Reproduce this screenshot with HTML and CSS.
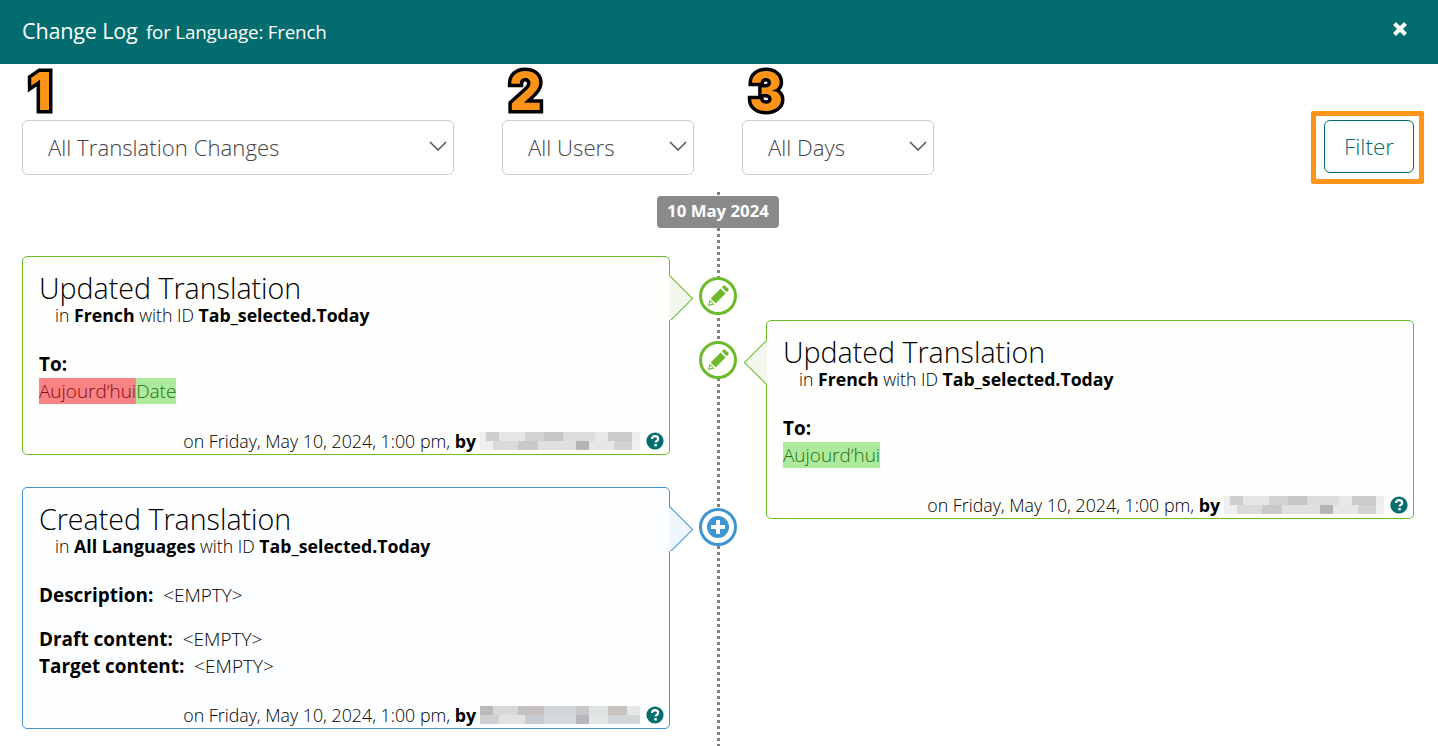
FILE: index.html
```html
<!DOCTYPE html>
<html>
<head>
    <meta charset="UTF-8">
    <meta name="viewport" content="width=device-width, initial-scale=1.0">
    <title>Change Log</title>
    <link rel="stylesheet" href="styles.css">
</head>
<body>
    <svg class="defs" width="0" height="0">
        <symbol id="pencil" viewBox="0 0 24 24">
            <path d="M2 22 L3.6 15.6 L6 18 L8.4 20.4 Z M4.6 14.4 L14.6 4.4 L19.6 9.4 L9.6 19.4 Z M15.8 3.2 L17.4 1.7 Q18.3 1 19.2 1.7 L22.3 4.8 Q23 5.7 22.3 6.6 L20.8 8.2 Z"/>
            <path d="M3.4 20.6 L4.2 17.4 L6.6 19.8 Z" fill="#fff"/>
        </symbol>
        <symbol id="help" viewBox="0 0 18 18">
            <circle cx="9" cy="9" r="8.6" fill="#026c6e"/>
            <path d="M6 7 Q6.1 4.2 9.1 4.2 Q12.1 4.3 12.1 6.7 Q12.1 8.2 10.7 9 Q9.6 9.6 9.6 10.6" fill="none" stroke="#fff" stroke-width="2.2"/>
            <rect x="8.3" y="12" width="2.5" height="2.4" fill="#fff"/>
        </symbol>
        <symbol id="chevron" viewBox="0 0 18 10">
            <path d="M1 1 L9 9 L17 1" fill="none" stroke="#555" stroke-width="1.5"/>
        </symbol>
    </svg>

    <header class="modal-head">
        <h1>Change Log <small>for Language: French</small></h1>
        <svg class="close-icon" viewBox="0 0 16 16"><path d="M2.5 2.5 L13.5 13.5 M13.5 2.5 L2.5 13.5" stroke="#fff" stroke-width="4"/></svg>
    </header>

    <section class="filters">
        <div class="filter filter-type">
            <span class="step">1</span>
            <div class="select"><span>All Translation Changes</span><svg class="chevron"><use href="#chevron"/></svg></div>
        </div>
        <div class="filter filter-short">
            <span class="step">2</span>
            <div class="select"><span>All Users</span><svg class="chevron"><use href="#chevron"/></svg></div>
        </div>
        <div class="filter filter-short">
            <span class="step">3</span>
            <div class="select"><span>All Days</span><svg class="chevron"><use href="#chevron"/></svg></div>
        </div>
        <div class="filter-box"><button class="filter-btn">Filter</button></div>
    </section>

    <main class="timeline">
        <div class="date-row"><span class="date-badge">10 May 2024</span></div>
        <div class="columns">
            <div class="col">
                <article class="card card-update side-left">
                    <span class="arrow"></span>
                    <span class="node"><svg><use href="#pencil"/></svg></span>
                    <h3>Updated Translation</h3>
                    <p class="sub">in <b>French</b> with ID <b>Tab_selected.Today</b></p>
                    <p class="field field-label"><b>To:</b></p>
                    <p class="field"><span class="del">Aujourd’hui</span><span class="ins">Date</span></p>
                    <p class="meta">on Friday, May 10, 2024, 1:00 pm, <b>by</b> <span class="blur blur-a"></span><svg class="help"><use href="#help"/></svg></p>
                </article>
                <article class="card card-create side-left">
                    <span class="arrow"></span>
                    <span class="node node-plus"><span class="plus"></span></span>
                    <h3>Created Translation</h3>
                    <p class="sub">in <b>All Languages</b> with ID <b>Tab_selected.Today</b></p>
                    <p class="field field-label"><b>Description:</b>&nbsp; &lt;EMPTY&gt;</p>
                    <p class="field field-gap"><b>Draft content:</b>&nbsp; &lt;EMPTY&gt;</p>
                    <p class="field"><b>Target content:</b>&nbsp; &lt;EMPTY&gt;</p>
                    <p class="meta">on Friday, May 10, 2024, 1:00 pm, <b>by</b> <span class="blur blur-b"></span><svg class="help"><use href="#help"/></svg></p>
                </article>
            </div>
            <div class="col col-right">
                <article class="card card-update side-right">
                    <span class="arrow"></span>
                    <span class="node"><svg><use href="#pencil"/></svg></span>
                    <h3>Updated Translation</h3>
                    <p class="sub">in <b>French</b> with ID <b>Tab_selected.Today</b></p>
                    <p class="field field-label"><b>To:</b></p>
                    <p class="field"><span class="ins">Aujourd’hui</span></p>
                    <p class="meta">on Friday, May 10, 2024, 1:00 pm, <b>by</b> <span class="blur blur-a"></span><svg class="help"><use href="#help"/></svg></p>
                </article>
            </div>
        </div>
    </main>
</body>
</html>
```

FILE: styles.css
```css
* { box-sizing: border-box; }
html, body { height: 100%; }
body { margin: 0; overflow: hidden; background: #fff; color: #000; font-family: "Open Sans", sans-serif; font-size: 18px; font-weight: 300; line-height: 27px; }
p, h1, h3 { margin: 0; }
b { font-weight: 700; }
.defs { position: absolute; }

.modal-head { height: 64px; background: #026c6e; color: #fff; display: flex; align-items: center; justify-content: space-between; padding: 0 30px 2px 22px; }
.modal-head h1 { font-size: 21.6px; font-weight: 400; line-height: 30px; letter-spacing: -0.2px; }
.modal-head small { font-size: 18.8px; margin-left: 3px; }
.close-icon { width: 16px; height: 16px; margin-top: -4px; }

.filters { display: flex; align-items: flex-end; gap: 48px; height: 111px; padding: 0 24px 0 22px; }
.filter { display: flex; flex-direction: column; }
.filter-type { width: 432px; }
.filter-short { width: 192px; }
.step { height: 56px; padding-left: 7px; font-family: "Inter", sans-serif; font-size: 52px; font-weight: 800; line-height: 56px; color: #fb9419; -webkit-text-stroke: 7px #000; paint-order: stroke fill; text-shadow: 1px 2px 2px rgba(0, 0, 0, 0.35); }
.select { height: 55px; border: 1px solid #ccc; border-radius: 6px; display: flex; align-items: center; justify-content: space-between; padding: 0 6px 0 25px; color: #444; font-size: 22.2px; font-weight: 300; }
.chevron { width: 18px; height: 10px; margin-top: -3px; }
.filter-box { position: relative; margin-left: auto; margin-bottom: 2px; }
.filter-box::after { content: ""; position: absolute; left: -13px; top: -9px; right: -10px; bottom: -11px; border: 5px solid #fb9419; border-radius: 2px; pointer-events: none; }
.filter-btn { display: block; width: 90px; height: 53px; background: #fff; border: 1px solid #026c6e; border-radius: 6px; color: #026c6e; font-family: inherit; font-size: 22.5px; font-weight: 300; padding: 0; }

.timeline { position: relative; height: 571px; padding: 21px 24px 0 22px; }
.timeline::before { content: ""; position: absolute; left: 717px; top: 17px; bottom: 0; width: 3px; background: repeating-linear-gradient(180deg, #808080 0 3px, transparent 3px 6px); }
.date-row { position: relative; display: flex; justify-content: center; height: 32px; margin-bottom: 28px; }
.date-badge { width: 122px; height: 32px; background: #8a8a8a; border-radius: 4px; color: #fff; font-size: 16.8px; font-weight: 700; line-height: 30px; text-align: center; }
.columns { display: grid; grid-template-columns: 648px 648px; column-gap: 96px; }
.col { display: flex; flex-direction: column; gap: 32px; }
.col-right { padding-top: 64px; }

.card { position: relative; display: flex; flex-direction: column; border: 1px solid; border-radius: 5px; padding: 13px 5px 0 16px; }
.card-update { height: 199px; border-color: #6cbb2b; background: #fefefc; }
.card-create { height: 242px; border-color: #3f95d2; background: #fdfeff; }
.card h3 { font-size: 28.6px; font-weight: 300; line-height: 36px; }
.sub { padding-left: 16px; font-size: 17.7px; line-height: 18px; margin-top: 0; }
.field { font-size: 18.95px; }
.field-label { margin-top: 27px; }
.field-gap { margin-top: 17px; }
.del { background: #f98385; color: #8c0a12; }
.ins { background: #aeea9c; color: #23701a; }
.del, .ins { display: inline-block; height: 26px; }

.meta { margin-top: auto; padding-top: 1px; display: flex; align-items: center; justify-content: flex-end; white-space: pre; height: 27px; font-size: 17.8px; }
.help { width: 18px; height: 18px; flex: none; margin-left: 6px; }
.blur { display: inline-block; width: 160px; height: 18px; margin-left: 4px; filter: blur(0.6px); background-repeat: no-repeat; background-size: 100% 50%; background-position: 0 0, 0 100%; }
.blur-a { background-image: linear-gradient(90deg, #ededed 0 4%, #cfcfcf 4% 12%, #e6e6e6 12% 28%, #d3d3d3 28% 40%, #c6c6c6 40% 52%, #dcdcdc 52% 72%, #e9e9e9 72% 80%, #cbcbcb 80% 95%, #eeeeee 95%), linear-gradient(90deg, #efefef 0 8%, #dadada 8% 24%, #c9c9c9 24% 36%, #e0e0e0 36% 60%, #b5b5b5 60% 68%, #e6e6e6 68% 84%, #d2d2d2 84% 95%, #f0f0f0 95%); }
.blur-b { background-image: linear-gradient(90deg, #bdb9b9 0 8%, #d8d8d8 8% 24%, #c4c0c0 24% 40%, #d0d4d6 40% 60%, #c8c6c8 60% 68%, #dfe2e2 68% 80%, #c7c3c1 80% 92%, #e6e8e8 92%), linear-gradient(90deg, #d0d0d4 0 12%, #e2e2e4 12% 28%, #c6ccd0 28% 40%, #d6dadc 40% 60%, #b8b6bb 60% 68%, #e2e6e6 68% 80%, #d2d6d8 80%); }

.arrow { position: absolute; top: 17px; width: 24px; height: 46px; }
.arrow::before { content: ""; position: absolute; top: 6.5px; width: 33px; height: 33px; transform: rotate(45deg); border: 1px solid; border-color: inherit; background: #f3f8ef; }
.card-update .arrow { border-color: #6cbb2b; }
.card-create .arrow { border-color: #3f95d2; }
.card-create .arrow::before { background: #eff7fd; }
.side-left .arrow { right: -24px; overflow: hidden; }
.side-left .arrow::before { left: -18px; border-left-color: transparent; border-bottom-color: transparent; }
.side-right .arrow { left: -24px; overflow: hidden; }
.side-right .arrow::before { left: 8px; border-right-color: transparent; border-top-color: transparent; }

.node { position: absolute; top: 20px; width: 38px; height: 38px; border: 3px solid; border-radius: 50%; background: #fff; display: flex; align-items: center; justify-content: center; }
.side-left .node { right: -68px; }
.side-right .node { left: -68px; }
.card-update .node { border-color: #6cbb2b; fill: #6cbb2b; }
.node svg { width: 24px; height: 24px; }
.node-plus { border-color: #3f95d2; }
.plus { position: relative; width: 22px; height: 22px; border-radius: 50%; background: #3f95d2; }
.plus::before { content: ""; position: absolute; left: 9px; top: 4px; width: 4px; height: 14px; background: #fff; }
.plus::after { content: ""; position: absolute; left: 4px; top: 9px; width: 14px; height: 4px; background: #fff; }
```
